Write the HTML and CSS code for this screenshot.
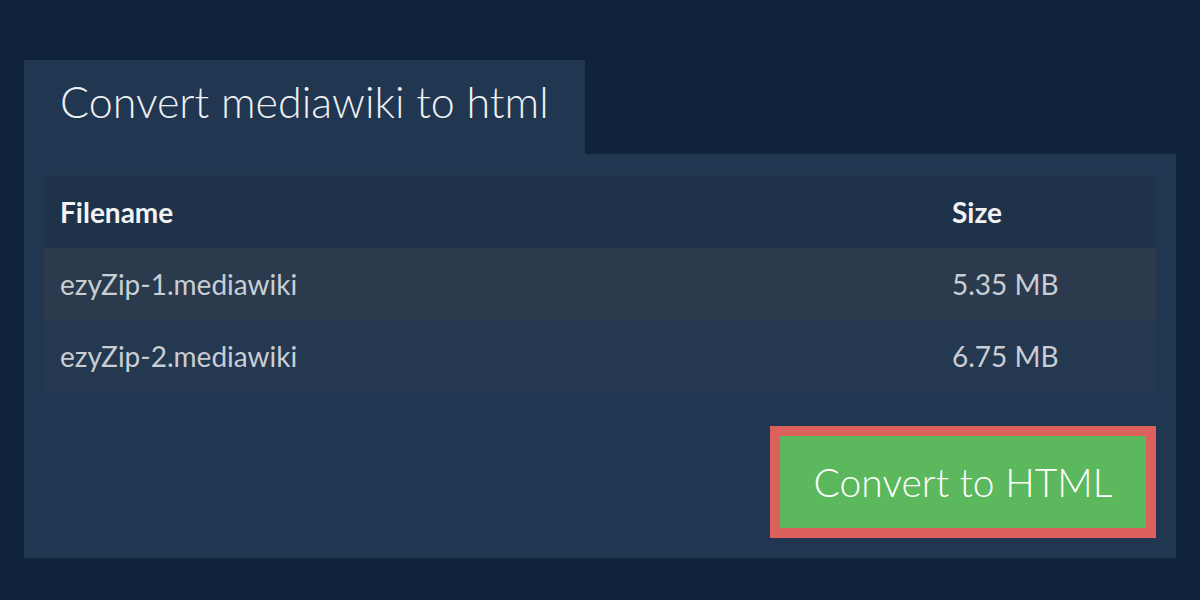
FILE: index.html
```html
<!DOCTYPE html>
<html>
<head>
<meta charset="utf-8">
<link rel="stylesheet" href="styles.css">
</head>
<body>
<div class="wrap">
  <div class="tab"><h1 class="title">Convert mediawiki to html</h1></div>
  <div class="panel">
    <table class="files">
      <thead>
        <tr><th class="c-name">Filename</th><th class="c-size">Size</th></tr>
      </thead>
      <tbody>
        <tr class="odd"><td>ezyZip-1.mediawiki</td><td>5.35 MB</td></tr>
        <tr class="even"><td>ezyZip-2.mediawiki</td><td>6.75 MB</td></tr>
      </tbody>
    </table>
    <div class="actions">
      <button class="convert">Convert to HTML</button>
    </div>
  </div>
</div>
</body>
</html>
```
FILE: styles.css
```css
html, body {
  margin: 0;
  padding: 0;
  background: #0f233a;
  font-family: Lato, "Open Sans", sans-serif;
}
.wrap {
  padding: 60px 24px 0 24px;
}
.tab {
  width: 561px;
  height: 94px;
  background: #213650;
  box-sizing: border-box;
  padding-left: 36px;
  display: flex;
  align-items: center;
}
.title {
  margin: 0;
  font-weight: 300;
  font-size: 43px;
  color: #eef0f2;
  line-height: 1;
  padding-bottom: 12px;
}
.panel {
  background: #213650;
  padding: 21px 20px 20px 20px;
}
.files {
  width: 100%;
  border-collapse: collapse;
  font-size: 28px;
}
.files th {
  text-align: left;
  font-weight: 700;
  color: #f2f3f5;
  height: 73px;
  padding: 0 16px;
  background: #1e3249;
}
.files td {
  height: 72px;
  padding: 0 16px;
  color: #c9ced5;
}
.files th.c-size {
  width: 188px;
}
.odd td { background: #2b3b4d; }
.even td { background: #243850; }
.actions {
  display: flex;
  justify-content: flex-end;
  margin-top: 34px;
}
.convert {
  width: 386px;
  height: 112px;
  box-sizing: border-box;
  border: 10px solid #dc605c;
  background: #5cb85c;
  color: #ffffff;
  font-family: Lato, "Open Sans", sans-serif;
  font-size: 39px;
  font-weight: 300;
  padding: 0;
}
```
